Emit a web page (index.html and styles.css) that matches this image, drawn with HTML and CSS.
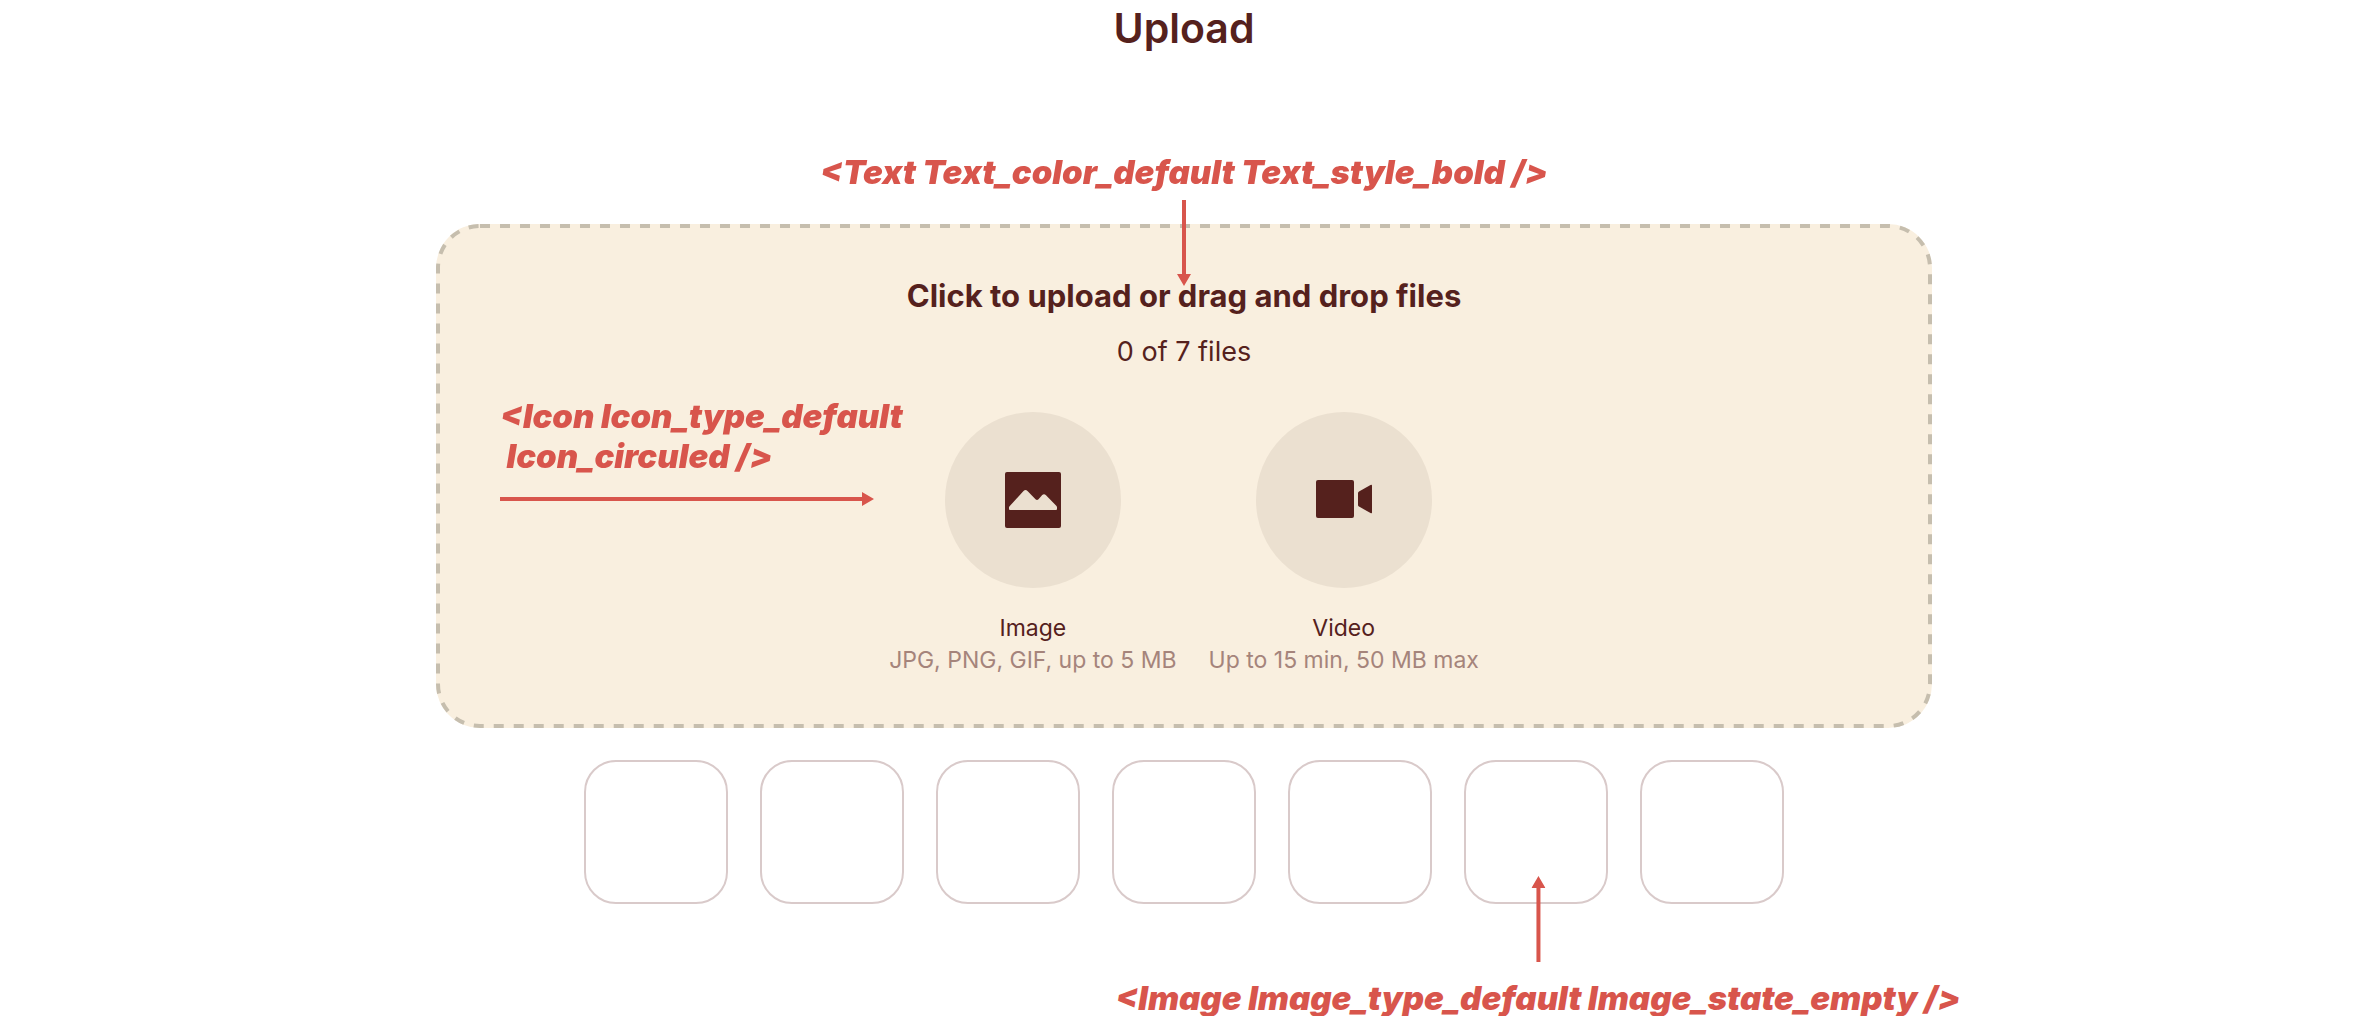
FILE: index.html
```html
<!DOCTYPE html>
<html lang="en">
<head>
<meta charset="utf-8">
<meta name="viewport" content="width=device-width, initial-scale=1">
<title>Upload</title>
<link rel="stylesheet" href="styles.css">
</head>
<body>
<main class="page">
  <h1 class="title">Upload</h1>
  <section class="uploader">
    <div class="note note-text">
      <code class="note-label">&lt;Text Text_color_default Text_style_bold /&gt;</code>
      <svg class="arrow-vertical" viewBox="0 0 14 86" aria-hidden="true"><path d="M5 0h4v74h5L7 86 0 74h5z"/></svg>
    </div>
    <div class="dropzone">
      <svg class="outline" aria-hidden="true"><rect class="outline-rect" x="2" y="2" rx="42"/></svg>
      <input class="file-input" id="files" type="file" multiple>
      <label class="heading" for="files">Click to upload or drag and drop files</label>
      <p class="count">0 of 7 files</p>
      <ul class="types">
        <li class="type">
          <span class="circle">
            <svg class="icon" viewBox="0 0 56 56" aria-hidden="true"><rect width="56" height="56" rx="2"/><path class="cutout" d="M4.800 34 18.500 19q2-2 4 0l8 8.200q1.500 1.500 3 0l3.500-4q2-2 4 0L51.500 34q.5.700.5 1.500V37q0 1-1 1H5q-1 0-1-1v-1.500q0-.8.8-1.500z"/></svg>
          </span>
          <span class="type-name">Image</span>
          <span class="type-hint">JPG, PNG, GIF, up to 5 MB</span>
        </li>
        <li class="type">
          <span class="circle">
            <svg class="icon" viewBox="0 0 56 56" aria-hidden="true"><rect y="8" width="38" height="38" rx="2"/><path d="M42 21q0-1 1-1.600L54.500 13q1.500-.8 1.500.5v27q0 1.300-1.500.5L43 34.600q-1-.6-1-1.600z"/></svg>
          </span>
          <span class="type-name">Video</span>
          <span class="type-hint">Up to 15 min, 50 MB max</span>
        </li>
      </ul>
      <div class="note note-icon">
        <code class="note-label">&lt;Icon Icon_type_default<br>&nbsp;Icon_circuled /&gt;</code>
        <svg class="arrow-horizontal" viewBox="0 0 374 14" aria-hidden="true"><path d="M0 5h362V0l12 7-12 7V9H0z"/></svg>
      </div>
    </div>
    <ul class="thumbs">
      <li class="thumb"></li>
      <li class="thumb"></li>
      <li class="thumb"></li>
      <li class="thumb"></li>
      <li class="thumb"></li>
      <li class="thumb">
        <div class="note note-image">
          <svg class="arrow-vertical" viewBox="0 0 14 86" aria-hidden="true"><path d="M5 86h4V12h5L7 0 0 12h5z"/></svg>
          <code class="note-label">&lt;Image Image_type_default Image_state_empty /&gt;</code>
        </div>
      </li>
      <li class="thumb"></li>
    </ul>
  </section>
</main>
</body>
</html>
```
FILE: styles.css
```css
* { box-sizing: border-box; }
body {
  margin: 0;
  background: #fff;
  color: #55211d;
  font-family: Inter, "Liberation Sans", sans-serif;
}
ul { list-style: none; margin: 0; padding: 0; }
svg { display: block; }

.page { padding: 4px 32px 112px; }
.title {
  margin: 0;
  font-size: 41px;
  line-height: 48px;
  font-weight: 600;
  text-align: center;
}
.uploader {
  max-width: 1496px;
  margin: 100px auto 0;
}

.note { color: #d8554c; }
.note svg { fill: currentColor; }
.note-label {
  font: italic 900 33px/40px Inter, "Liberation Sans", sans-serif;
  white-space: nowrap;
}
.arrow-vertical { width: 14px; height: 86px; }
.arrow-horizontal { width: 374px; height: 14px; }
.note-text {
  position: relative;
  z-index: 1;
  display: flex;
  flex-direction: column;
  align-items: center;
  gap: 8px;
  margin-bottom: -62px;
  pointer-events: none;
}
.note-icon {
  position: absolute;
  top: 172px;
  left: 64px;
  display: flex;
  flex-direction: column;
  gap: 16px;
  text-align: left;
}
.note-image {
  position: absolute;
  top: 114px;
  left: 72px;
  display: flex;
  flex-direction: column;
  align-items: center;
  gap: 16px;
  transform: translateX(-50%);
}

.dropzone {
  position: relative;
  padding: 52px 0;
  border-radius: 44px;
  background: #f9efdf;
  text-align: center;
}
.outline {
  position: absolute;
  inset: 0;
  width: 100%;
  height: 100%;
}
.outline-rect {
  width: calc(100% - 4px);
  height: calc(100% - 4px);
  fill: none;
  stroke: #c6beae;
  stroke-width: 4px;
  stroke-dasharray: 10 10;
}
.file-input {
  position: absolute;
  inset: 0;
  width: 100%;
  height: 100%;
  opacity: 0;
  cursor: pointer;
}
.heading {
  display: block;
  font-size: 31px;
  line-height: 40px;
  font-weight: 700;
}
.count {
  margin: 16px 0 40px;
  font-size: 27px;
  line-height: 40px;
}
.types {
  display: flex;
  justify-content: center;
  gap: 32px;
}
.type {
  display: flex;
  flex-direction: column;
  align-items: center;
  font-size: 23px;
  line-height: 32px;
}
.circle {
  display: grid;
  place-items: center;
  width: 176px;
  height: 176px;
  margin-bottom: 24px;
  border-radius: 50%;
  background: #ebe0d0;
}
.icon { width: 56px; height: 56px; fill: #55211d; }
.cutout { fill: #ebe0d0; }
.type-hint { color: #a5847b; }

.thumbs {
  display: flex;
  justify-content: center;
  gap: 32px;
  margin-top: 32px;
}
.thumb {
  position: relative;
  width: 144px;
  height: 144px;
  border: 2px solid #d9caca;
  border-radius: 32px;
}
```
